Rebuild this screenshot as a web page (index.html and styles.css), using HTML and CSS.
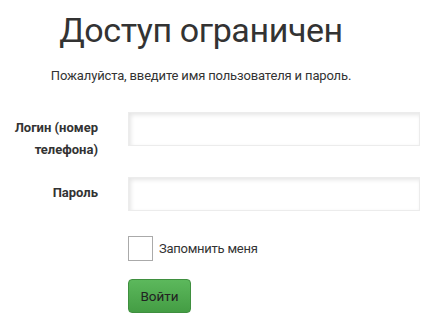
FILE: index.html
```html
<!DOCTYPE html>
<html lang="ru">
<head>
<meta charset="utf-8">
<link rel="stylesheet" href="styles.css">
</head>
<body>
<div class="page">
  <h1 class="title">Доступ ограничен</h1>
  <p class="lead">Пожалуйста, введите имя пользователя и пароль.</p>
  <form class="form">
    <div class="row">
      <label class="label">Логин (номер телефона)</label>
      <input class="field" type="text">
    </div>
    <div class="row">
      <label class="label">Пароль</label>
      <input class="field" type="password">
    </div>
    <div class="row">
      <span class="label"></span>
      <label class="remember"><span class="box"></span>Запомнить меня</label>
    </div>
    <div class="row">
      <span class="label"></span>
      <button class="btn" type="button">Войти</button>
    </div>
  </form>
</div>
</body>
</html>
```
FILE: styles.css
```css
html, body {
  margin: 0;
  padding: 0;
  background: #fff;
}
body {
  font-family: Roboto, "Noto Sans", sans-serif;
  color: #333;
  width: 428px;
  height: 323px;
  overflow: hidden;
}
.page {
  width: 402px;
}
.title {
  margin: 0;
  padding-top: 5px;
  height: 49px;
  font-size: 34px;
  font-weight: 400;
  line-height: 50px;
  letter-spacing: -0.4px;
  text-align: center;
  color: #333;
}
.lead {
  margin: 12px 0 0;
  font-size: 13px;
  line-height: 20px;
  letter-spacing: -0.15px;
  text-align: center;
  color: #333;
}
.form {
  margin-top: 26px;
  display: flex;
  flex-direction: column;
}
.row {
  display: grid;
  grid-template-columns: 98px 292px;
  column-gap: 30px;
  align-items: start;
}
.row + .row {
  margin-top: 16px;
}
.label {
  text-align: right;
  font-size: 13px;
  font-weight: 700;
  line-height: 22px;
  padding-top: 5px;
  color: #333;
}
.field {
  box-sizing: border-box;
  width: 292px;
  height: 34px;
  margin: 0;
  border: 1px solid #ececec;
  background: #fff;
  box-shadow: inset 2px 2px 4px rgba(0,0,0,0.1);
  padding: 4px 8px;
}
.remember {
  display: flex;
  align-items: center;
  gap: 6px;
  font-size: 13px;
  letter-spacing: -0.25px;
  color: #333;
  margin-top: 9px;
}
.box {
  box-sizing: border-box;
  width: 25px;
  height: 25px;
  border: 1px solid #aaa;
  background: #fff;
}
.btn {
  box-sizing: border-box;
  width: 63px;
  height: 34px;
  margin-top: 2px;
  border: 1px solid #3f8f3f;
  border-radius: 4px;
  background: linear-gradient(#5cb85c, #449d44);
  color: #222;
  font-family: inherit;
  font-size: 13.5px;
  padding: 0;
}
```
